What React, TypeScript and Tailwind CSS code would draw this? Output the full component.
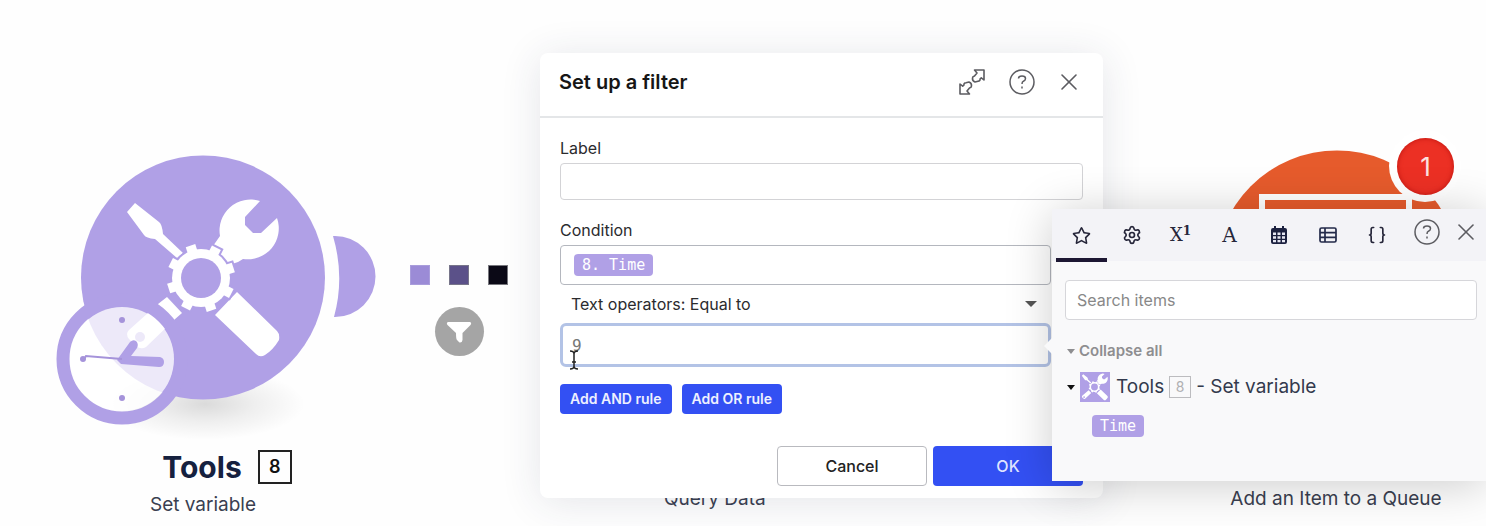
import { useState } from "react";
import { Braces, Settings, X } from "lucide-react";
import { FaRegStar } from "react-icons/fa";

const TEETH = [27, 72, 117, 162, 207, 252, 297, 342];

function GearShape() {
  return (
    <>
      <circle cx="201" cy="278" r="29" />
      {TEETH.map((angle) => (
        <rect key={angle} x="225" y="273" width="10" height="10" transform={`rotate(${angle} 201 278)`} />
      ))}
    </>
  );
}

// screwdriver + wrench crossed behind a gear
function ToolsShape() {
  return (
    <>
      <g fill="#fff">
        <path d="M135 203 L127 212 L144 235 Q146 238 155 239 L177 258 L183 253 L163 234 Q162 224 159 222 Z" />
        <path d="M167 297 L182 313 L174 320 L146 347 Q141 350 136 346 L129 339 Q125 334 129 330 L158 304 Z" />
        <circle cx="140" cy="337" r="5" fill="#b0a0e6" />
        <path d="M260 201 L245 217 V225 L253 233 L261 233 L277 218 A31 31 0 0 1 243 259 L238 262 L226 266 L213 246 L220 236 A31 31 0 0 1 260 201 Z" />
        <path d="M237 292 L277 331 Q280 334 279 340 Q273 350 265 355 Q260 358 256 354 L215 315 Z" />
      </g>
      <g fill="#b0a0e6" stroke="#b0a0e6" strokeWidth="4">
        <GearShape />
      </g>
      <g fill="#fff">
        <GearShape />
      </g>
      <circle cx="201" cy="278" r="20" fill="#b0a0e6" />
    </>
  );
}

function ToolsNode() {
  return (
    <div className="absolute top-[146px] left-[46px] flex w-[336px] flex-col">
      <svg viewBox="46 146 336 294" className="h-[294px] w-full" aria-hidden="true">
        <defs>
          <radialGradient id="ground">
            <stop offset="0" stopColor="#000" stopOpacity="0.14" />
            <stop offset="0.5" stopColor="#000" stopOpacity="0.06" />
            <stop offset="1" stopColor="#000" stopOpacity="0" />
          </radialGradient>
        </defs>
        <ellipse cx="205" cy="404" rx="100" ry="36" fill="url(#ground)" />
        <circle cx="203" cy="277.500" r="122" fill="#b0a0e6" />
        <path d="M333 236 H335 A40.500 40.500 0 0 1 335 317 H334 Q345 277 333 236 Z" fill="#b0a0e6" />
        <ToolsShape />
        <circle cx="122" cy="359" r="52" fill="#fff" fillOpacity="0.77" />
        <circle cx="122" cy="359" r="59" fill="none" stroke="#b0a0e6" strokeWidth="13" />
        <g fill="#a593da">
          <circle cx="122" cy="320" r="3" />
          <circle cx="122" cy="398" r="3" />
          <circle cx="83" cy="359" r="3" />
        </g>
        <g fill="#b0a0e6">
          <path d="M117 360 L130 342 Q133 339 136 341 Q139 344 137 348 L131 356 L160 357 Q164 358 164 362 Q164 367 159 367 L121 364 Z" />
          <path d="M122 359 L86 356 L84 359" fill="none" stroke="#a593da" strokeWidth="2" />
        </g>
      </svg>
      <div className="flex h-[53px] items-center justify-center gap-4 pl-[26px]">
        <h2 className="text-3xl leading-9 font-bold text-[#16213f]">Tools</h2>
        <span className="flex h-[34px] w-[34px] items-center justify-center border-2 border-[#222] text-lg font-semibold text-[#111]">
          8
        </span>
      </div>
      <p className="-ml-[22px] text-center text-[19px] leading-6 text-[#3a3f50]">Set variable</p>
    </div>
  );
}

function Connection() {
  return (
    <div className="absolute top-[265px] left-[410px] flex w-[98px] flex-col items-center gap-[22px]">
      <div className="flex w-full justify-between">
        <span className="h-5 w-5 border border-[#a99ddb] bg-[#9b8bd6]" />
        <span className="h-5 w-5 border border-[#77758a] bg-[#5b5189]" />
        <span className="h-5 w-5 border border-[#77777d] bg-[#0b0916]" />
      </div>
      <button aria-label="Filter" className="flex h-[49px] w-[49px] items-center justify-center rounded-full bg-[#a5a5a5]">
        <svg viewBox="0 0 26 24" className="h-6 w-[26px]" fill="#fff">
          <path d="M2 2 H24 Q26 3 24.500 5 L16.500 13 V20 Q16 23 13.500 22.500 L11 20 Q10 19 10 13 L1.500 5 Q0 3 2 2 Z" />
        </svg>
      </button>
    </div>
  );
}

function QueueNode() {
  return (
    <div className="absolute top-[130px] left-[1206px] flex w-[260px] flex-col items-center">
      <svg viewBox="1206 130 260 270" className="h-[357px] w-full" preserveAspectRatio="xMidYMin" aria-hidden="true">
        <circle cx="1337" cy="272.500" r="122" fill="#e65b2c" />
        <rect x="1262" y="197" width="147" height="120" fill="none" stroke="#fff" strokeWidth="6" />
        <circle cx="1425" cy="166" r="36" fill="#fff" />
      </svg>
      <span className="absolute top-2 right-3 flex h-[57px] w-[57px] items-center justify-center rounded-full bg-[#ec3024] text-[26px] text-[#fbe3e0] shadow-[inset_0_0_5px_rgba(160,0,0,0.6)]">
        1
      </span>
      <p className="text-[19px] leading-6 whitespace-nowrap text-[#3a3f50]">Add an Item to a Queue</p>
    </div>
  );
}

function HelpIcon() {
  return (
    <svg viewBox="0 0 26 26" className="h-[26px] w-[26px]" fill="none" stroke="#5c5c61" strokeWidth="1.500">
      <circle cx="13" cy="13" r="12" />
      <path d="M9.500 9.500 Q9.500 7 13 7 Q16.500 7 16.500 9.500 Q16.500 11.300 14.500 12.200 Q13 13 13 15" />
      <path d="M13 17.500 V19.500" />
    </svg>
  );
}

function ExpandIcon() {
  return (
    <svg viewBox="0 0 26 26" className="h-[26px] w-[26px]" fill="none" stroke="#5c5c61" strokeWidth="1.600" strokeLinejoin="round">
      <path d="M15.500 1 H25 V11 L22.300 8.800 L21 10 Q21.500 12 19 12.300 L16 13 Q13.200 12 13.500 9 Q13.500 7.500 15.500 7 L18 4 Z" />
      <path d="M10.500 25 H1 V15 L3.700 17.200 L5 16 Q4.500 14 7 13.700 L10 13 Q12.800 14 12.500 17 Q12.500 18.500 10.500 19 L8 22 Z" />
    </svg>
  );
}

function CalendarIcon() {
  return (
    <svg viewBox="0 0 16 18" className="h-[18px] w-4">
      <path d="M3 0 H5 V2 H11 V0 H13 V2 H14 Q16 2 16 4 V16 Q16 18 14 18 H2 Q0 18 0 16 V4 Q0 2 2 2 H3 Z" fill="#1c2140" />
      <path
        d="M2 6.500 H5 V9 H2 Z M6.500 6.500 H9.500 V9 H6.500 Z M11 6.500 H14 V9 H11 Z M2 10.300 H5 V12.700 H2 Z M6.500 10.300 H9.500 V12.700 H6.500 Z M11 10.300 H14 V12.700 H11 Z M2 14 H5 V16.300 H2 Z M6.500 14 H9.500 V16.300 H6.500 Z M11 14 H14 V16.300 H11 Z"
        fill="#e6e7f2"
      />
    </svg>
  );
}

function TableIcon() {
  return (
    <svg viewBox="0 0 18 16" className="h-4 w-[18px]" fill="none" stroke="#232a4a" strokeWidth="1.700">
      <rect x="1" y="1" width="16" height="14" rx="1.500" />
      <path d="M6 1 V15 M1 5.700 H17 M1 10.300 H17" />
    </svg>
  );
}

function Token({ children }: { children: string }) {
  return (
    <span className="flex h-[22px] items-center rounded-sm bg-[#b0a0e6] px-2 font-['DejaVu_Sans_Mono',monospace] text-[15px] text-white">
      {children}
    </span>
  );
}

function FilterDialog() {
  const [value, setValue] = useState("9");

  return (
    <section
      role="dialog"
      aria-labelledby="filter-title"
      className="absolute top-[53px] left-[540px] w-[563px] rounded-lg bg-white shadow-[0_4px_40px_rgba(40,50,80,0.12)]"
    >
      <header className="flex h-[65px] items-center justify-between border-b-2 border-[#e4e6e8] pr-5 pb-[6px] pl-[19px]">
        <h1 id="filter-title" className="text-xl font-semibold text-[#161616]">
          Set up a filter
        </h1>
        <div className="flex items-center gap-6">
          <button aria-label="Expand">
            <ExpandIcon />
          </button>
          <div className="flex items-center gap-5">
            <button aria-label="Help">
              <HelpIcon />
            </button>
            <button aria-label="Close">
              <X size={28} strokeWidth={1.4} color="#5c5c61" />
            </button>
          </div>
        </div>
      </header>
      <div className="px-5 pt-[19px] text-[#2b2b2e]">
        <label htmlFor="label" className="block h-[26px] text-base leading-[22px]">
          Label
        </label>
        <input id="label" className="block h-[37px] w-full rounded border border-[#d3d3d6] px-3" />
        <div className="mr-8">
          <div id="condition" className="mt-5 h-[25px] text-base leading-[20px]">
            Condition
          </div>
          <div
            role="textbox"
            tabIndex={0}
            aria-labelledby="condition"
            className="flex h-10 items-center rounded border border-[#b4b7be] px-[13px]"
          >
            <Token>8. Time</Token>
          </div>
          <div className="relative">
            <select aria-label="Operator" className="h-[38px] w-full appearance-none px-[11px] text-base">
              <option>Text operators: Equal to</option>
            </select>
            <span className="pointer-events-none absolute top-4 right-[14px] border-x-[6px] border-t-[6px] border-x-transparent border-t-[#555]" />
          </div>
          <div className="relative">
            <input
              aria-label="Value"
              value={value}
              onChange={(e) => setValue(e.target.value)}
              className="block h-11 w-full rounded-md border-[3px] border-[#b3c3e6] px-[9px] font-['DejaVu_Sans_Mono',monospace] text-base text-[#777] outline-none"
            />
            <svg viewBox="0 0 10 20" className="absolute top-[27px] left-[9px] h-5 w-[10px]" fill="none" stroke="#222" strokeWidth="1.500">
              <path d="M1 1 Q5 1 5 4 Q5 1 9 1 M5 3 V17 M1 19 Q5 19 5 16 Q5 19 9 19 M3 12 H7" />
            </svg>
          </div>
        </div>
        <div className="mt-[17px] flex gap-[10px]">
          <button className="h-[30px] rounded bg-[#3350f3] px-[10px] text-sm font-semibold text-[#eef0ff]">Add AND rule</button>
          <button className="h-[30px] rounded bg-[#3350f3] px-[10px] text-sm font-semibold text-[#eef0ff]">Add OR rule</button>
        </div>
      </div>
      <footer className="flex justify-end gap-[6px] px-5 pt-8 pb-3">
        <button className="h-10 w-[150px] rounded border border-[#b9babf] text-base font-medium text-[#222]">Cancel</button>
        <button className="h-10 w-[150px] rounded bg-[#3350f3] text-base font-medium text-[#dfe4ff]">OK</button>
      </footer>
    </section>
  );
}

const TABS = [
  { name: "Favorites", icon: <FaRegStar size={19} /> },
  { name: "General", icon: <Settings size={20} strokeWidth={2} /> },
  {
    name: "Math",
    icon: (
      <span className="font-['DejaVu_Serif',serif] text-lg leading-5">
        X<sup className="text-xs font-bold">1</sup>
      </span>
    ),
  },
  { name: "Text", icon: <span className="font-['DejaVu_Serif',serif] text-xl leading-5">A</span> },
  { name: "Date", icon: <CalendarIcon /> },
  { name: "Array", icon: <TableIcon /> },
  { name: "Variables", icon: <Braces size={20} /> },
];

function ItemsPanel() {
  return (
    <aside className="absolute top-[209px] left-[1052px] w-[434px] bg-[#f9f9fa] pb-11 shadow-[0_4px_44px_rgba(0,0,0,0.2)]">
      <span className="absolute top-[129px] -left-2 border-y-8 border-r-8 border-y-transparent border-r-[#f9f9fa]" />
      <div className="flex h-[52px] justify-between bg-[#f3f3f7] pr-[6px] pl-1">
        <div role="tablist" className="flex">
          {TABS.map((tab, i) => (
            <button
              key={tab.name}
              role="tab"
              aria-label={tab.name}
              aria-selected={i === 0}
              className={
                i === 0
                  ? "flex h-[53px] w-[51px] items-center justify-center border-b-4 border-[#1d1733] pt-[3px] text-[#26263a]"
                  : "flex h-[53px] w-[49px] items-center justify-center border-b-4 border-transparent pt-[3px] text-[#26263a]"
              }
            >
              {tab.icon}
            </button>
          ))}
        </div>
        <div className="flex h-[46px] items-center gap-3">
          <button aria-label="Help">
            <HelpIcon />
          </button>
          <button aria-label="Close">
            <X size={28} strokeWidth={1.4} color="#5c5c61" />
          </button>
        </div>
      </div>
      <div className="pt-[19px] pr-[9px] pl-[13px]">
        <input
          aria-label="Search items"
          placeholder="Search items"
          className="block h-10 w-full rounded border border-[#d6d6da] bg-white px-[11px] text-base placeholder:text-[#888]"
        />
        <button className="mt-[19px] flex h-6 items-center gap-1 pl-[2px] text-[15px] font-semibold text-[#8e8e90]">
          <span className="border-x-4 border-t-[5px] border-x-transparent border-t-[#8e8e90]" />
          Collapse all
        </button>
        <div className="mt-[9px] flex h-[30px] items-center pl-[2px] text-[19px] text-[#333a4d]">
          <span className="mr-[5px] border-x-4 border-t-[5px] border-x-transparent border-t-[#111]" />
          <svg viewBox="116 190 176 176" className="mr-[6px] h-[30px] w-[30px] bg-[#b0a0e6]" aria-hidden="true">
            <ToolsShape />
          </svg>
          Tools
          <span className="mx-[5px] flex h-[22px] w-[22px] items-center justify-center border border-[#bcbcbf] text-sm text-[#b0b0b2]">
            8
          </span>
          - Set variable
        </div>
        <div className="mt-[13px] flex pl-[27px]">
          <Token>Time</Token>
        </div>
      </div>
    </aside>
  );
}

export default function App() {
  return (
    <main className="relative min-h-screen w-full overflow-hidden bg-[#fefefe] font-[Inter,sans-serif]">
      <ToolsNode />
      <Connection />
      <p className="absolute top-[487px] left-[664px] text-[19px] leading-6 text-[#3a3f50]">Query Data</p>
      <QueueNode />
      <FilterDialog />
      <ItemsPanel />
    </main>
  );
}
